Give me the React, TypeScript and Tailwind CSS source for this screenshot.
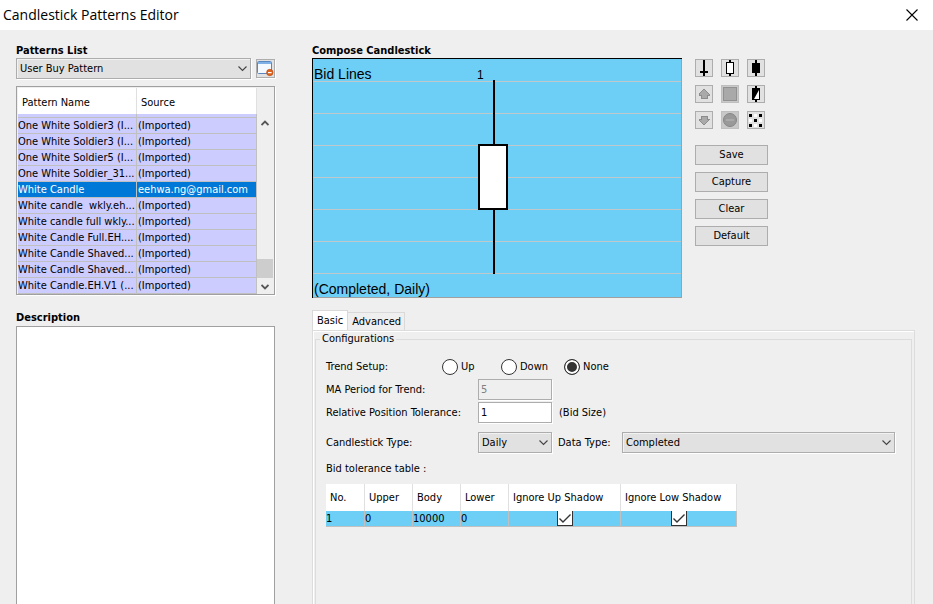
import type { ReactNode, SelectHTMLAttributes } from "react";

const patterns = [
  ["One White Soldier3 (I...", "(Imported)"],
  ["One White Soldier3 (I...", "(Imported)"],
  ["One White Soldier5 (I...", "(Imported)"],
  ["One White Soldier_31...", "(Imported)"],
  ["White Candle", "eehwa.ng@gmail.com"],
  ["White candle  wkly.eh...", "(Imported)"],
  ["White candle full wkly...", "(Imported)"],
  ["White Candle Full.EH....", "(Imported)"],
  ["White Candle Shaved...", "(Imported)"],
  ["White Candle Shaved...", "(Imported)"],
  ["White Candle.EH.V1 (...", "(Imported)"],
];

const bidLines = [23, 55, 87, 119, 151, 183, 215];

function Select({ children, ...props }: SelectHTMLAttributes<HTMLSelectElement>) {
  return (
    <div className="relative w-full shadow-[1px_1px_0_#fff]">
      <select
        {...props}
        className="block h-[21px] w-full appearance-none border border-[#adadad] bg-[#e1e1e1] pl-[3px] pr-4 shadow-[inset_1px_1px_0_#f2f2f2]"
      >
        {children}
      </select>
      <svg
        viewBox="0 0 9 6"
        className="pointer-events-none absolute right-1 top-2 h-[6px] w-[9px]"
      >
        <path d="M0.5 0.5 4.5 4.5 8.5 0.5" fill="none" stroke="#444" strokeWidth="1.1" />
      </svg>
    </div>
  );
}

function ToolButton({
  label,
  disabled,
  children,
}: {
  label: string;
  disabled?: boolean;
  children: ReactNode;
}) {
  return (
    <button
      aria-label={label}
      disabled={disabled}
      className="h-[18px] w-[18px] border border-[#adadad] bg-[#e1e1e1] disabled:border-[#bfbfbf] disabled:bg-[#c8c8c8]"
    >
      <svg viewBox="0 0 16 16" className="block h-4 w-4" shapeRendering="crispEdges">
        {children}
      </svg>
    </button>
  );
}

function Radio({ label, checked }: { label: string; checked?: boolean }) {
  return (
    <label className="flex items-center gap-[3px]">
      <input
        type="radio"
        name="trend"
        defaultChecked={checked}
        className="h-4 w-4 appearance-none rounded-full border border-[#333] bg-white checked:bg-[#333] checked:shadow-[inset_0_0_0_2px_#fff]"
      />
      {label}
    </label>
  );
}

function TableCheck({ label }: { label: string }) {
  return (
    <div className="relative mx-auto h-[15px] w-4">
      <input
        type="checkbox"
        aria-label={label}
        defaultChecked
        className="peer block h-[15px] w-4 appearance-none border border-t-0 border-[#333] bg-white"
      />
      <svg
        viewBox="0 0 16 15"
        className="pointer-events-none invisible absolute inset-0 peer-checked:visible"
      >
        <path d="M2.5 7.5 6 11 13.5 3.5" fill="none" stroke="#333" strokeWidth="1.4" />
      </svg>
    </div>
  );
}

export default function App() {
  return (
    <div className="flex h-screen flex-col overflow-hidden bg-[#efefef] font-['DejaVu_Sans_Condensed','DejaVu_Sans',sans-serif] text-[11px] leading-[14px] text-black">
      <header className="flex h-[30px] shrink-0 items-center justify-between bg-white pl-[3px] pr-[15px]">
        <h1 className="font-['Open_Sans',sans-serif] text-[14px] leading-5">
          Candlestick Patterns Editor
        </h1>
        <button aria-label="Close">
          <svg viewBox="0 0 12 12" className="block h-3 w-3">
            <path d="M0.5 0.5 11.5 11.5M11.5 0.5 0.5 11.5" stroke="#000" strokeWidth="1.1" />
          </svg>
        </button>
      </header>

      <main className="flex min-h-0 flex-1 pl-4 pr-[18px] pt-[14px]">
        {/* Patterns list and description */}
        <section className="flex w-[259px] shrink-0 flex-col">
          <label htmlFor="list" className="font-bold">
            Patterns List
          </label>
          <div className="flex items-center gap-[5px]">
            <Select id="list">
              <option>User Buy Pattern</option>
            </Select>
            <button
              aria-label="Remove pattern"
              className="h-[19px] w-[19px] shrink-0 border border-[#adadad] bg-[#e1e1e1] shadow-[1px_1px_0_#fff]"
            >
              <svg viewBox="0 0 17 17" className="block h-[17px] w-[17px]">
                <rect x="0.5" y="1.5" width="14" height="12" rx="1" fill="#f4f9ff" stroke="#5a87bd" />
                <rect x="1" y="2" width="13" height="2" fill="#7fb0e6" />
                <circle cx="12.8" cy="12.5" r="3.2" fill="#e0641c" stroke="#b8430c" strokeWidth="0.6" />
                <rect x="11" y="12" width="3.6" height="1.2" fill="#fff" />
              </svg>
            </button>
          </div>

          <div className="mt-[7px] flex border border-[#a0a0a0] px-px pt-px shadow-[1px_1px_0_#fff]">
            <table className="flex-1 table-fixed border-separate border-spacing-0 text-left">
              <thead>
                <tr className="h-[26px] bg-white *:border-r *:border-[#e0e0e0] *:pb-0 *:pl-1 *:pt-[3px] *:font-normal">
                  <th className="w-[119px]">Pattern Name</th>
                  <th>Source</th>
                </tr>
              </thead>
              <tbody>
                <tr className="h-1 bg-[#ccccff]" aria-hidden="true">
                  <td className="border-b border-r border-[#c0c0c0]" />
                  <td className="border-b border-r border-[#c0c0c0]" />
                </tr>
                {patterns.map(([name, source], i) => (
                  <tr
                    key={i}
                    className={source === "(Imported)" ? "bg-[#ccccff]" : "bg-[#0078d7] text-white"}
                  >
                    <td className="h-4 overflow-hidden whitespace-pre border-b border-r border-[#c0c0c0]">
                      {name}
                    </td>
                    <td className="h-4 overflow-hidden whitespace-pre border-b border-r border-[#c0c0c0] pl-px">
                      {source}
                    </td>
                  </tr>
                ))}
              </tbody>
            </table>
            <div className="flex w-4 flex-col items-center pb-1 pt-8">
              <svg viewBox="0 0 8 6" className="h-[6px] w-2">
                <path d="M0.5 5 4 1.5 7.5 5" fill="none" stroke="#555" strokeWidth="1.8" />
              </svg>
              <div className="mt-auto h-[19px] w-full bg-[#cdcdcd]" />
              <svg viewBox="0 0 8 6" className="mt-[6px] h-[6px] w-2">
                <path d="M0.5 1 4 4.5 7.5 1" fill="none" stroke="#555" strokeWidth="1.8" />
              </svg>
            </div>
          </div>

          <label htmlFor="description" className="mt-4 pb-px font-bold">
            Description
          </label>
          <textarea
            id="description"
            className="block flex-1 resize-none border border-b-0 border-[#a0a0a0] bg-white p-1"
          />
        </section>

        {/* Candlestick composer */}
        <section className="ml-[37px] flex min-w-0 flex-1 flex-col">
          <h2 className="font-bold">Compose Candlestick</h2>
          <div className="flex gap-[13px]">
            <svg
              viewBox="0 0 370 240"
              className="h-[240px] w-[370px] shrink-0 font-['Liberation_Sans',sans-serif] text-[14px]"
              shapeRendering="crispEdges"
            >
              <rect width="370" height="240" fill="#000" />
              <rect x="1" y="1" width="369" height="239" fill="#a0a0a0" />
              <rect x="1" y="1" width="368" height="238" fill="#6dcff6" />
              {bidLines.map((y) => (
                <rect key={y} x="1" y={y} width="368" height="1" fill="#c0c8cc" />
              ))}
              <rect x="181" y="22" width="2" height="194" fill="#000" />
              <rect x="167" y="87" width="28" height="64" fill="#fff" stroke="#000" strokeWidth="2" />
              <text x="2" y="21">Bid Lines</text>
              <text x="165" y="21" fontSize="12">1</text>
              <text x="2" y="236">(Completed, Daily)</text>
            </svg>

            <div className="pt-px">
              <div className="grid grid-cols-[18px_18px_18px] gap-2">
                <ToolButton label="Doji candle">
                  <path d="M7 0h2v16H7zM4 11h8v2H4z" />
                </ToolButton>
                <ToolButton label="White candle">
                  <path d="M7 0h2v16H7zM4 2h8v12H4z" />
                  <path d="M5 3h6v10H5z" fill="#fff" />
                </ToolButton>
                <ToolButton label="Black candle">
                  <path d="M7 0h2v16H7zM4 3h8v10H4z" />
                </ToolButton>
                <ToolButton label="Move up">
                  <path d="M8 3 13 8v1h-2v3H5V9H3V8z" fill="#a9a9a9" stroke="#8c8c8c" />
                </ToolButton>
                <ToolButton label="Blank" disabled>
                  <path d="M1.5 1.5h13v13h-13z" fill="#a9a9a9" stroke="#919191" />
                </ToolButton>
                <ToolButton label="Any candle">
                  <path d="M7 0h2v16H7zM4 2h8v12H4z" />
                  <path d="M11 4v9H6z" fill="#fff" shapeRendering="auto" />
                </ToolButton>
                <ToolButton label="Move down">
                  <path d="M8 13 3 8V7h2V4h6v3h2v1z" fill="#a9a9a9" stroke="#8c8c8c" />
                </ToolButton>
                <ToolButton label="Remove" disabled>
                  <circle cx="8" cy="8" r="6.5" fill="#999" stroke="#858585" shapeRendering="auto" />
                  <path d="M4 7h8v2H4z" fill="#aaa" />
                </ToolButton>
                <ToolButton label="Random">
                  <path d="M0 0h16v16H0z" fill="#e1e1e1" />
                  <path d="M6 2h3v3H6zM1 7h3v3H1zM11 7h3v3h-3zM6 12h3v3H6z" fill="#fff" />
                  <path d="M1 2h3v3H1zM11 2h3v3h-3zM6 7h3v3H6zM1 12h3v3H1zM11 12h3v3h-3z" />
                </ToolButton>
              </div>
              <div className="mt-4 flex w-[73px] flex-col gap-[7px]">
                {["Save", "Capture", "Clear", "Default"].map((name) => (
                  <button key={name} className="h-5 border border-[#adadad] bg-[#e1e1e1]">
                    {name}
                  </button>
                ))}
              </div>
            </div>
          </div>

          <div role="tablist" className="mt-3 flex items-end">
            <button
              role="tab"
              aria-selected="true"
              className="h-5 border border-b-0 border-[#d9d9d9] bg-white px-1"
            >
              Basic
            </button>
            <button
              role="tab"
              aria-selected="false"
              className="h-[18px] border border-b-0 border-l-0 border-[#d9d9d9] px-[3px] pl-1"
            >
              Advanced
            </button>
          </div>
          <div
            role="tabpanel"
            className="flex min-h-0 flex-1 flex-col border border-b-0 border-[#dcdcdc] px-[2px] pt-px shadow-[inset_1px_1px_0_#fff]"
          >
            <fieldset className="min-w-0 flex-1 border border-b-0 border-[#dcdcdc] pl-[10px] pr-4">
              <legend className="-ml-[6px] px-[2px]">Configurations</legend>
              <div className="grid grid-cols-[152px_1fr] items-center gap-y-[2px] pt-[11px]">
                <span>Trend Setup:</span>
                <div className="-ml-9 grid h-5 grid-cols-[59px_63px_auto] items-center">
                  <Radio label="Up" />
                  <Radio label="Down" />
                  <Radio label="None" checked />
                </div>
                <label htmlFor="period">MA Period for Trend:</label>
                <input
                  id="period"
                  disabled
                  defaultValue="5"
                  className="h-[21px] w-[74px] border border-[#adadad] px-[2px] text-[#808080] shadow-[1px_1px_0_#fff]"
                />
                <label htmlFor="tolerance">Relative Position Tolerance:</label>
                <div className="flex items-center gap-[7px]">
                  <input
                    id="tolerance"
                    defaultValue="1"
                    className="h-[21px] w-[74px] border border-[#adadad] bg-white px-[2px] shadow-[1px_1px_0_#fff]"
                  />
                  (Bid Size)
                </div>
              </div>
              <div className="mt-[9px] grid grid-cols-[152px_74px_70px_1fr] items-center">
                <label htmlFor="candle">Candlestick Type:</label>
                <Select id="candle">
                  <option>Daily</option>
                </Select>
                <label htmlFor="data" className="pl-[6px]">
                  Data Type:
                </label>
                <Select id="data">
                  <option>Completed</option>
                </Select>
              </div>

              <p className="mt-[9px]">Bid tolerance table :</p>
              <table className="mt-2 w-[411px] table-fixed border-separate border-spacing-0 text-left">
                <thead>
                  <tr className="h-[27px] bg-white *:border-r *:border-[#e0e0e0] *:pl-1 *:font-normal">
                    <th className="w-[39px]">No.</th>
                    <th className="w-12">Upper</th>
                    <th className="w-12">Body</th>
                    <th className="w-12">Lower</th>
                    <th className="w-28">Ignore Up Shadow</th>
                    <th>Ignore Low Shadow</th>
                  </tr>
                </thead>
                <tbody>
                  <tr className="h-4 bg-[#6dcff6] *:border-b *:border-r *:border-[#c0c0c0] *:p-0">
                    <td>1</td>
                    <td>0</td>
                    <td>10000</td>
                    <td>0</td>
                    <td>
                      <TableCheck label="Ignore up shadow" />
                    </td>
                    <td>
                      <TableCheck label="Ignore low shadow" />
                    </td>
                  </tr>
                </tbody>
              </table>
            </fieldset>
          </div>
        </section>
      </main>
    </div>
  );
}
